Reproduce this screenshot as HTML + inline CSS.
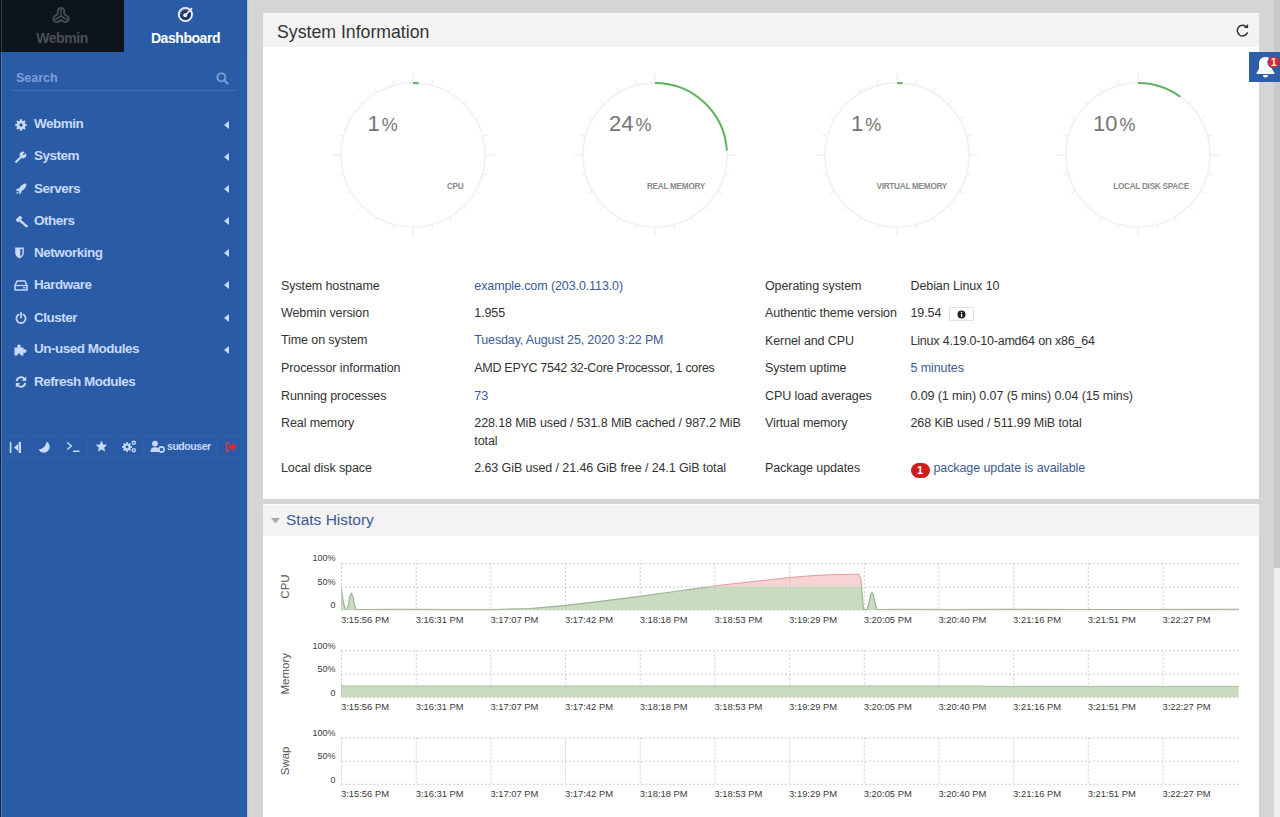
<!DOCTYPE html>
<html><head><meta charset="utf-8">
<style>
*{box-sizing:border-box;margin:0;padding:0}
html,body{width:1280px;height:817px;overflow:hidden}
body{background:#d5d5d5;font-family:"Liberation Sans",sans-serif;position:relative;color:#333}
.abs{position:absolute}
#side{position:absolute;left:0;top:0;width:247px;height:817px;background:#2a5ba6}
#side .edge{position:absolute;left:0;top:0;width:3px;height:817px;background:linear-gradient(90deg,#0b2459 0,#0b2459 1px,#5877ab 1px,#5877ab 2px,#2e5a98 2px)}
#side .edge2{position:absolute;left:0;top:0;width:3px;height:52px;background:linear-gradient(90deg,#05080c 0,#05080c 1px,#3c4148 1px,#3c4148 2px,#0e141c 2px)}
#side .rline{position:absolute;left:246px;top:0;width:1px;height:817px;background:#26508f}
#tabw{position:absolute;left:0;top:0;width:124px;height:52px;background:#0e141c}
.tabt{position:absolute;top:30px;height:16px;line-height:16px;font-size:14px;font-weight:bold;letter-spacing:-0.45px;text-align:center}
#search{position:absolute;left:16px;top:70px;font-size:12.5px;font-weight:bold;color:#7e9fd6;line-height:16px}
#sline{position:absolute;left:11px;top:90px;width:226px;height:1px;background:#3d6cb5}
.mi{position:absolute;left:0;width:247px;height:20px}
.mi .t{position:absolute;left:34px;top:1.7px;font-size:13.5px;font-weight:bold;letter-spacing:-0.5px;color:#c8daf9;line-height:16px;white-space:nowrap}

.mi .car{position:absolute;left:224px;top:6px;width:0;height:0;border-top:4px solid transparent;border-bottom:4px solid transparent;border-right:5px solid #c8daf9}
#tool{position:absolute;left:3px;top:435px;width:244px;height:23px;border-top:1px solid #3161ab;border-bottom:1px solid #3161ab}
.sep{position:absolute;top:437px;width:1px;height:20px;background:#3060aa}
#main{position:absolute;left:263px;top:13px;width:996px;height:486px;background:#fff}
#main .hd{position:absolute;left:0;top:0;width:996px;height:34px;background:#f3f3f3;border-top:1px solid #fbfbfb}
#main .hd .tt{position:absolute;left:14px;top:8px;font-size:17.7px;line-height:20px;color:#333;white-space:nowrap}
#stats{position:absolute;left:263px;top:504px;width:996px;height:320px;background:#fff}
#stats .hd{position:absolute;left:0;top:0;width:996px;height:32px;background:#f3f3f3;border-top:1px solid #fbfbfb}
#stats .hd .tt{position:absolute;left:23px;top:6px;font-size:15.5px;line-height:18px;color:#3b5a96;white-space:nowrap}
.row{position:absolute;font-size:12.5px;line-height:18px;white-space:nowrap;color:#333;letter-spacing:-0.1px}
.lnk{color:#3a5a97}
#scroll{position:absolute;left:1274px;top:0;width:6px;height:817px;background:#efefef}
#thumb{position:absolute;left:1274px;top:0;width:6px;height:568px;background:#c9c9c9}
.gnum{font-size:22px;line-height:26px;color:#757575;white-space:nowrap}
.gnum span{font-size:18px;margin-left:2px}
.glab{width:200px;margin-top:1.5px;text-align:right;font-size:8.2px;font-weight:bold;color:#8a8a8a;line-height:10px;letter-spacing:-0.25px;white-space:nowrap}
.badge{display:inline-block;width:19px;height:15px;border-radius:8px;background:#d11c1c;color:#fff;font-weight:bold;font-size:11px;line-height:15px;text-align:center;margin-right:4px;vertical-align:-2px}
</style></head><body>
<div id="side">
  <div id="tabw"></div>
  <div class="edge"></div><div class="edge2"></div>
  <div class="tabt" style="left:0;width:124px;color:#4b5058">Webmin</div>
  <div class="tabt" style="left:124px;width:123px;color:#fff">Dashboard</div>

  <svg class="abs" style="left:51.5px;top:6.5px" width="18" height="17" viewBox="0 0 18 17">
    <g fill="none" stroke-linecap="round" stroke-linejoin="round">
      <path d="M9 9 L9 4.4 M9 9 L4.6 11.8 M9 9 L13.4 11.8" stroke="#464c54" stroke-width="8.6"/>
      <path d="M9 9 L9 4.4 M9 9 L4.6 11.8 M9 9 L13.4 11.8" stroke="#0e141c" stroke-width="4.6"/>
      <path d="M9 9 L9 1.5 M9 9 L2.6 13 M9 9 L15.4 13" stroke="#464c54" stroke-width="1.5"/>
    </g>
  </svg>
  <svg class="abs" style="left:177px;top:6px" width="17" height="17" viewBox="0 0 17 17">
    <circle cx="8.4" cy="8.5" r="6.6" fill="#1f3566" stroke="#eef4ff" stroke-width="1.9"/>
    <path d="M4 8 A4.5 4.5 0 0 1 11 4.3" fill="none" stroke="#8fa6d0" stroke-width="1.3" stroke-dasharray="1 1"/>
    <line x1="8.2" y1="9.3" x2="14.6" y2="2.6" stroke="#eef4ff" stroke-width="1.6" stroke-linecap="round"/>
    <circle cx="8.2" cy="9.3" r="2" fill="#eef4ff"/>
  </svg>
  <svg class="abs" style="left:216px;top:72px" width="13" height="13" viewBox="0 0 13 13">
    <circle cx="5.3" cy="5.3" r="4" fill="none" stroke="#7e9fd6" stroke-width="1.8"/>
    <line x1="8.3" y1="8.3" x2="11.6" y2="11.6" stroke="#7e9fd6" stroke-width="2" stroke-linecap="round"/>
  </svg>
  <div id="search">Search</div>
  <div id="sline"></div>
<div class="mi" style="top:114.5px"><div class="ic" style="position:absolute;left:14.6px;top:4.0px;line-height:0"><svg width="12" height="12" viewBox="0 0 12 12"><g fill="#c8daf9"><circle cx="6" cy="6" r="4.3"/><g stroke="#c8daf9" stroke-width="2.2"><line x1="6" y1="0.3" x2="6" y2="11.7"/><line x1="0.3" y1="6" x2="11.7" y2="6"/><line x1="2" y1="2" x2="10" y2="10"/><line x1="10" y1="2" x2="2" y2="10"/></g></g><circle cx="6" cy="6" r="1.7" fill="#2a5ba6"/></svg></div><div class="t">Webmin</div><div class="car"></div></div>
<div class="mi" style="top:146.8px"><div class="ic" style="position:absolute;left:15.2px;top:4.0px;line-height:0"><svg width="12" height="12" viewBox="0 0 12 12"><path d="M1.2 10.8 L6.3 5.7" stroke="#c8daf9" stroke-width="2.2" stroke-linecap="round"/><path d="M5 5.5 A3.3 3.3 0 0 1 9.7 1.2 L7.8 3 L8.9 4.1 L10.8 2.3 A3.3 3.3 0 0 1 6.5 7 Z" fill="#c8daf9"/></svg></div><div class="t">System</div><div class="car"></div></div>
<div class="mi" style="top:179.0px"><div class="ic" style="position:absolute;left:15.2px;top:4.0px;line-height:0"><svg width="12" height="12" viewBox="0 0 12 12"><path d="M11.5 0.5 C8 0.5 5.5 2.5 4 5.5 L2 5.8 L0.5 7.8 L3 7.6 L4.4 9 L4.2 11.5 L6.2 10 L6.5 8 C9.5 6.5 11.5 4 11.5 0.5 Z" fill="#c8daf9"/><path d="M2.6 8.2 L0.8 11.2 L3.8 9.4 Z" fill="#c8daf9"/></svg></div><div class="t">Servers</div><div class="car"></div></div>
<div class="mi" style="top:211.2px"><div class="ic" style="position:absolute;left:14.8px;top:3.5px;line-height:0"><svg width="13" height="13" viewBox="0 0 13 13"><path d="M0.5 5 L5 0.5 L7.5 3 L3 7.5 Z" fill="#c8daf9"/><path d="M5.5 6 L11.8 11.3" stroke="#c8daf9" stroke-width="2.3" stroke-linecap="round"/></svg></div><div class="t">Others</div><div class="car"></div></div>
<div class="mi" style="top:243.0px"><div class="ic" style="position:absolute;left:15px;top:4.0px;line-height:0"><svg width="9" height="12" viewBox="0 0 9 12"><path d="M0.2 0.6 L8.8 0.6 L8.8 6 C8.8 8.8 6.5 10.6 4.5 11.6 C2.5 10.6 0.2 8.8 0.2 6 Z" fill="#c8daf9"/><path d="M5.3 2 L7.4 2 L7.4 6 C7.4 7.6 6.5 8.8 5.3 9.6 Z" fill="#2a5ba6"/></svg></div><div class="t">Networking</div><div class="car"></div></div>
<div class="mi" style="top:275.2px"><div class="ic" style="position:absolute;left:13.5px;top:4.5px;line-height:0"><svg width="14" height="11" viewBox="0 0 14 11"><path d="M1 5.5 L3 1 L11 1 L13 5.5 L13 10 L1 10 Z" fill="none" stroke="#c8daf9" stroke-width="1.5" stroke-linejoin="round"/><line x1="1" y1="5.5" x2="13" y2="5.5" stroke="#c8daf9" stroke-width="1.3"/><rect x="9" y="7.2" width="2.5" height="1.2" fill="#c8daf9"/></svg></div><div class="t">Hardware</div><div class="car"></div></div>
<div class="mi" style="top:308.2px"><div class="ic" style="position:absolute;left:14.8px;top:4.0px;line-height:0"><svg width="12" height="12" viewBox="0 0 12 12"><path d="M3.5 2.6 A4.6 4.6 0 1 0 8.5 2.6" fill="none" stroke="#c8daf9" stroke-width="1.8" stroke-linecap="round"/><line x1="6" y1="0.9" x2="6" y2="5.6" stroke="#c8daf9" stroke-width="1.8" stroke-linecap="round"/></svg></div><div class="t">Cluster</div><div class="car"></div></div>
<div class="mi" style="top:339.7px"><div class="ic" style="position:absolute;left:14.2px;top:4.0px;line-height:0"><svg width="13" height="12" viewBox="0 0 13 12"><path d="M0.5 3.5 L3.5 3.5 C3 2.5 3 0.5 5 0.5 C7 0.5 7 2.5 6.5 3.5 L9.5 3.5 L9.5 5.5 C10.5 5 12.5 5 12.5 7 C12.5 9 10.5 9 9.5 8.5 L9.5 11.5 L6.5 11.5 C7 10.5 6.5 9.5 5 9.5 C3.5 9.5 3 10.5 3.5 11.5 L0.5 11.5 Z" fill="#c8daf9"/></svg></div><div class="t">Un-used Modules</div><div class="car"></div></div>
<div class="mi" style="top:372.4px"><div class="ic" style="position:absolute;left:14.9px;top:4.0px;line-height:0"><svg width="12" height="12" viewBox="0 0 12 12"><path d="M1.6 5 A4.5 4.5 0 0 1 9.6 3" fill="none" stroke="#c8daf9" stroke-width="1.9"/><path d="M11.2 0.6 L11.2 5 L6.8 5 Z" fill="#c8daf9"/><path d="M10.4 7 A4.5 4.5 0 0 1 2.4 9" fill="none" stroke="#c8daf9" stroke-width="1.9"/><path d="M0.8 11.4 L0.8 7 L5.2 7 Z" fill="#c8daf9"/></svg></div><div class="t">Refresh Modules</div></div>
  <div id="tool"></div>
  <div class="sep" style="left:29px"></div><div class="sep" style="left:58px"></div><div class="sep" style="left:87px"></div><div class="sep" style="left:114px"></div><div class="sep" style="left:143px"></div><div class="sep" style="left:216px"></div>
  <svg class="abs" style="left:9px;top:441px" width="13" height="13" viewBox="0 0 13 13">
    <rect x="0.8" y="1" width="1.6" height="11" fill="#c8daf9"/><rect x="9.6" y="1" width="2.4" height="11" fill="#c8daf9"/><path d="M9 3 L5 6.5 L9 10 Z" fill="#c8daf9"/>
  </svg>
  <svg class="abs" style="left:38px;top:441px" width="12" height="12" viewBox="0 0 12 12">
    <path d="M8.6 0.6 A5.9 5.9 0 1 1 0.6 8.6 A8.5 8.5 0 0 0 8.6 0.6 Z" fill="#c8daf9"/>
  </svg>
  <svg class="abs" style="left:66px;top:440px" width="15" height="13" viewBox="0 0 15 13">
    <path d="M1.2 2.5 L5.3 6 L1.2 9.5" fill="none" stroke="#c8daf9" stroke-width="1.5" stroke-linejoin="miter"/>
    <rect x="7" y="10.5" width="6.5" height="1.5" fill="#c8daf9"/>
  </svg>
  <svg class="abs" style="left:95px;top:440px" width="13" height="13" viewBox="0 0 13 13">
    <path d="M6.5 0.6 L8.2 4.4 L12.3 4.7 L9.2 7.4 L10.1 11.6 L6.5 9.4 L2.9 11.6 L3.8 7.4 L0.7 4.7 L4.8 4.4 Z" fill="#c8daf9"/>
  </svg>
  <svg class="abs" style="left:122px;top:440px" width="15" height="13" viewBox="0 0 15 13">
    <g fill="#c8daf9">
      <circle cx="5" cy="7" r="3.6"/><g stroke="#c8daf9" stroke-width="1.7"><line x1="5" y1="2" x2="5" y2="12"/><line x1="0" y1="7" x2="10" y2="7"/><line x1="1.5" y1="3.5" x2="8.5" y2="10.5"/><line x1="8.5" y1="3.5" x2="1.5" y2="10.5"/></g>
      <circle cx="11.8" cy="2.8" r="2.2"/><circle cx="11.8" cy="10.2" r="2.2"/>
    </g>
    <circle cx="5" cy="7" r="1.4" fill="#2a5ba6"/><circle cx="11.8" cy="2.8" r="0.9" fill="#2a5ba6"/><circle cx="11.8" cy="10.2" r="0.9" fill="#2a5ba6"/>
  </svg>
  <svg class="abs" style="left:150px;top:440px" width="15" height="13" viewBox="0 0 15 13">
    <circle cx="5" cy="3.6" r="2.9" fill="#c8daf9"/><path d="M0.5 12 C0.5 8.5 2 7.2 5 7.2 C7 7.2 8.2 7.8 8.8 9 L8.8 12 Z" fill="#c8daf9"/>
    <circle cx="11.5" cy="9.5" r="2.6" fill="none" stroke="#c8daf9" stroke-width="1.6"/>
  </svg>
  <div class="abs" style="left:167px;top:439px;font-size:10.5px;font-weight:bold;color:#c8daf9;line-height:14px;letter-spacing:-0.45px">sudouser</div>
  <svg class="abs" style="left:225px;top:442px" width="12" height="10" viewBox="0 0 12 10">
    <path d="M4.5 1 L1.5 1 L1.5 9 L4.5 9" fill="none" stroke="#d9413a" stroke-width="1.4"/>
    <path d="M4 3.2 L7.5 3.2 L7.5 0.8 L11.5 5 L7.5 9.2 L7.5 6.8 L4 6.8 Z" fill="#f0242a"/>
  </svg>

</div>
<div id="main">
  <div class="hd"><div class="tt">System Information</div></div>
</div>
<svg class="abs" style="left:323.0px;top:65.2px" width="180" height="180" viewBox="0 0 180 180"><circle cx="90.0" cy="90.0" r="72" fill="none" stroke="#f3f3f3" stroke-width="2"/><line x1="90.00" y1="17.50" x2="90.00" y2="8.50" stroke="#e9e9e9" stroke-width="1"/><line x1="108.76" y1="19.97" x2="109.93" y2="15.62" stroke="#e9e9e9" stroke-width="1"/><line x1="126.25" y1="27.21" x2="128.50" y2="23.32" stroke="#e9e9e9" stroke-width="1"/><line x1="141.27" y1="38.73" x2="144.45" y2="35.55" stroke="#e9e9e9" stroke-width="1"/><line x1="152.79" y1="53.75" x2="156.68" y2="51.50" stroke="#e9e9e9" stroke-width="1"/><line x1="160.03" y1="71.24" x2="164.38" y2="70.07" stroke="#e9e9e9" stroke-width="1"/><line x1="162.50" y1="90.00" x2="171.50" y2="90.00" stroke="#e9e9e9" stroke-width="1"/><line x1="160.03" y1="108.76" x2="164.38" y2="109.93" stroke="#e9e9e9" stroke-width="1"/><line x1="152.79" y1="126.25" x2="156.68" y2="128.50" stroke="#e9e9e9" stroke-width="1"/><line x1="141.27" y1="141.27" x2="144.45" y2="144.45" stroke="#e9e9e9" stroke-width="1"/><line x1="126.25" y1="152.79" x2="128.50" y2="156.68" stroke="#e9e9e9" stroke-width="1"/><line x1="108.76" y1="160.03" x2="109.93" y2="164.38" stroke="#e9e9e9" stroke-width="1"/><line x1="90.00" y1="162.50" x2="90.00" y2="171.50" stroke="#e9e9e9" stroke-width="1"/><line x1="71.24" y1="160.03" x2="70.07" y2="164.38" stroke="#e9e9e9" stroke-width="1"/><line x1="53.75" y1="152.79" x2="51.50" y2="156.68" stroke="#e9e9e9" stroke-width="1"/><line x1="38.73" y1="141.27" x2="35.55" y2="144.45" stroke="#e9e9e9" stroke-width="1"/><line x1="27.21" y1="126.25" x2="23.32" y2="128.50" stroke="#e9e9e9" stroke-width="1"/><line x1="19.97" y1="108.76" x2="15.62" y2="109.93" stroke="#e9e9e9" stroke-width="1"/><line x1="17.50" y1="90.00" x2="8.50" y2="90.00" stroke="#e9e9e9" stroke-width="1"/><line x1="19.97" y1="71.24" x2="15.62" y2="70.07" stroke="#e9e9e9" stroke-width="1"/><line x1="27.21" y1="53.75" x2="23.32" y2="51.50" stroke="#e9e9e9" stroke-width="1"/><line x1="38.73" y1="38.73" x2="35.55" y2="35.55" stroke="#e9e9e9" stroke-width="1"/><line x1="53.75" y1="27.21" x2="51.50" y2="23.32" stroke="#e9e9e9" stroke-width="1"/><line x1="71.24" y1="19.97" x2="70.07" y2="15.62" stroke="#e9e9e9" stroke-width="1"/><path d="M90.0 18.0 A72 72 0 0 1 95.65 18.22" fill="none" stroke="#5fb25f" stroke-width="2"/></svg>
<div class="abs gnum" style="left:367.5px;top:111.2px">1<span>%</span></div>
<div class="abs glab" style="left:263.5px;top:180.2px">CPU</div>
<svg class="abs" style="left:564.6px;top:65.2px" width="180" height="180" viewBox="0 0 180 180"><circle cx="90.0" cy="90.0" r="72" fill="none" stroke="#f3f3f3" stroke-width="2"/><line x1="90.00" y1="17.50" x2="90.00" y2="8.50" stroke="#e9e9e9" stroke-width="1"/><line x1="108.76" y1="19.97" x2="109.93" y2="15.62" stroke="#e9e9e9" stroke-width="1"/><line x1="126.25" y1="27.21" x2="128.50" y2="23.32" stroke="#e9e9e9" stroke-width="1"/><line x1="141.27" y1="38.73" x2="144.45" y2="35.55" stroke="#e9e9e9" stroke-width="1"/><line x1="152.79" y1="53.75" x2="156.68" y2="51.50" stroke="#e9e9e9" stroke-width="1"/><line x1="160.03" y1="71.24" x2="164.38" y2="70.07" stroke="#e9e9e9" stroke-width="1"/><line x1="162.50" y1="90.00" x2="171.50" y2="90.00" stroke="#e9e9e9" stroke-width="1"/><line x1="160.03" y1="108.76" x2="164.38" y2="109.93" stroke="#e9e9e9" stroke-width="1"/><line x1="152.79" y1="126.25" x2="156.68" y2="128.50" stroke="#e9e9e9" stroke-width="1"/><line x1="141.27" y1="141.27" x2="144.45" y2="144.45" stroke="#e9e9e9" stroke-width="1"/><line x1="126.25" y1="152.79" x2="128.50" y2="156.68" stroke="#e9e9e9" stroke-width="1"/><line x1="108.76" y1="160.03" x2="109.93" y2="164.38" stroke="#e9e9e9" stroke-width="1"/><line x1="90.00" y1="162.50" x2="90.00" y2="171.50" stroke="#e9e9e9" stroke-width="1"/><line x1="71.24" y1="160.03" x2="70.07" y2="164.38" stroke="#e9e9e9" stroke-width="1"/><line x1="53.75" y1="152.79" x2="51.50" y2="156.68" stroke="#e9e9e9" stroke-width="1"/><line x1="38.73" y1="141.27" x2="35.55" y2="144.45" stroke="#e9e9e9" stroke-width="1"/><line x1="27.21" y1="126.25" x2="23.32" y2="128.50" stroke="#e9e9e9" stroke-width="1"/><line x1="19.97" y1="108.76" x2="15.62" y2="109.93" stroke="#e9e9e9" stroke-width="1"/><line x1="17.50" y1="90.00" x2="8.50" y2="90.00" stroke="#e9e9e9" stroke-width="1"/><line x1="19.97" y1="71.24" x2="15.62" y2="70.07" stroke="#e9e9e9" stroke-width="1"/><line x1="27.21" y1="53.75" x2="23.32" y2="51.50" stroke="#e9e9e9" stroke-width="1"/><line x1="38.73" y1="38.73" x2="35.55" y2="35.55" stroke="#e9e9e9" stroke-width="1"/><line x1="53.75" y1="27.21" x2="51.50" y2="23.32" stroke="#e9e9e9" stroke-width="1"/><line x1="71.24" y1="19.97" x2="70.07" y2="15.62" stroke="#e9e9e9" stroke-width="1"/><path d="M90.0 18.0 A72 72 0 0 1 161.86 85.48" fill="none" stroke="#5fb25f" stroke-width="2"/></svg>
<div class="abs gnum" style="left:609.1px;top:111.2px">24<span>%</span></div>
<div class="abs glab" style="left:505.1px;top:180.2px">REAL MEMORY</div>
<svg class="abs" style="left:806.6px;top:65.2px" width="180" height="180" viewBox="0 0 180 180"><circle cx="90.0" cy="90.0" r="72" fill="none" stroke="#f3f3f3" stroke-width="2"/><line x1="90.00" y1="17.50" x2="90.00" y2="8.50" stroke="#e9e9e9" stroke-width="1"/><line x1="108.76" y1="19.97" x2="109.93" y2="15.62" stroke="#e9e9e9" stroke-width="1"/><line x1="126.25" y1="27.21" x2="128.50" y2="23.32" stroke="#e9e9e9" stroke-width="1"/><line x1="141.27" y1="38.73" x2="144.45" y2="35.55" stroke="#e9e9e9" stroke-width="1"/><line x1="152.79" y1="53.75" x2="156.68" y2="51.50" stroke="#e9e9e9" stroke-width="1"/><line x1="160.03" y1="71.24" x2="164.38" y2="70.07" stroke="#e9e9e9" stroke-width="1"/><line x1="162.50" y1="90.00" x2="171.50" y2="90.00" stroke="#e9e9e9" stroke-width="1"/><line x1="160.03" y1="108.76" x2="164.38" y2="109.93" stroke="#e9e9e9" stroke-width="1"/><line x1="152.79" y1="126.25" x2="156.68" y2="128.50" stroke="#e9e9e9" stroke-width="1"/><line x1="141.27" y1="141.27" x2="144.45" y2="144.45" stroke="#e9e9e9" stroke-width="1"/><line x1="126.25" y1="152.79" x2="128.50" y2="156.68" stroke="#e9e9e9" stroke-width="1"/><line x1="108.76" y1="160.03" x2="109.93" y2="164.38" stroke="#e9e9e9" stroke-width="1"/><line x1="90.00" y1="162.50" x2="90.00" y2="171.50" stroke="#e9e9e9" stroke-width="1"/><line x1="71.24" y1="160.03" x2="70.07" y2="164.38" stroke="#e9e9e9" stroke-width="1"/><line x1="53.75" y1="152.79" x2="51.50" y2="156.68" stroke="#e9e9e9" stroke-width="1"/><line x1="38.73" y1="141.27" x2="35.55" y2="144.45" stroke="#e9e9e9" stroke-width="1"/><line x1="27.21" y1="126.25" x2="23.32" y2="128.50" stroke="#e9e9e9" stroke-width="1"/><line x1="19.97" y1="108.76" x2="15.62" y2="109.93" stroke="#e9e9e9" stroke-width="1"/><line x1="17.50" y1="90.00" x2="8.50" y2="90.00" stroke="#e9e9e9" stroke-width="1"/><line x1="19.97" y1="71.24" x2="15.62" y2="70.07" stroke="#e9e9e9" stroke-width="1"/><line x1="27.21" y1="53.75" x2="23.32" y2="51.50" stroke="#e9e9e9" stroke-width="1"/><line x1="38.73" y1="38.73" x2="35.55" y2="35.55" stroke="#e9e9e9" stroke-width="1"/><line x1="53.75" y1="27.21" x2="51.50" y2="23.32" stroke="#e9e9e9" stroke-width="1"/><line x1="71.24" y1="19.97" x2="70.07" y2="15.62" stroke="#e9e9e9" stroke-width="1"/><path d="M90.0 18.0 A72 72 0 0 1 95.65 18.22" fill="none" stroke="#5fb25f" stroke-width="2"/></svg>
<div class="abs gnum" style="left:851.1px;top:111.2px">1<span>%</span></div>
<div class="abs glab" style="left:747.1px;top:180.2px">VIRTUAL MEMORY</div>
<svg class="abs" style="left:1048.4px;top:65.2px" width="180" height="180" viewBox="0 0 180 180"><circle cx="90.0" cy="90.0" r="72" fill="none" stroke="#f3f3f3" stroke-width="2"/><line x1="90.00" y1="17.50" x2="90.00" y2="8.50" stroke="#e9e9e9" stroke-width="1"/><line x1="108.76" y1="19.97" x2="109.93" y2="15.62" stroke="#e9e9e9" stroke-width="1"/><line x1="126.25" y1="27.21" x2="128.50" y2="23.32" stroke="#e9e9e9" stroke-width="1"/><line x1="141.27" y1="38.73" x2="144.45" y2="35.55" stroke="#e9e9e9" stroke-width="1"/><line x1="152.79" y1="53.75" x2="156.68" y2="51.50" stroke="#e9e9e9" stroke-width="1"/><line x1="160.03" y1="71.24" x2="164.38" y2="70.07" stroke="#e9e9e9" stroke-width="1"/><line x1="162.50" y1="90.00" x2="171.50" y2="90.00" stroke="#e9e9e9" stroke-width="1"/><line x1="160.03" y1="108.76" x2="164.38" y2="109.93" stroke="#e9e9e9" stroke-width="1"/><line x1="152.79" y1="126.25" x2="156.68" y2="128.50" stroke="#e9e9e9" stroke-width="1"/><line x1="141.27" y1="141.27" x2="144.45" y2="144.45" stroke="#e9e9e9" stroke-width="1"/><line x1="126.25" y1="152.79" x2="128.50" y2="156.68" stroke="#e9e9e9" stroke-width="1"/><line x1="108.76" y1="160.03" x2="109.93" y2="164.38" stroke="#e9e9e9" stroke-width="1"/><line x1="90.00" y1="162.50" x2="90.00" y2="171.50" stroke="#e9e9e9" stroke-width="1"/><line x1="71.24" y1="160.03" x2="70.07" y2="164.38" stroke="#e9e9e9" stroke-width="1"/><line x1="53.75" y1="152.79" x2="51.50" y2="156.68" stroke="#e9e9e9" stroke-width="1"/><line x1="38.73" y1="141.27" x2="35.55" y2="144.45" stroke="#e9e9e9" stroke-width="1"/><line x1="27.21" y1="126.25" x2="23.32" y2="128.50" stroke="#e9e9e9" stroke-width="1"/><line x1="19.97" y1="108.76" x2="15.62" y2="109.93" stroke="#e9e9e9" stroke-width="1"/><line x1="17.50" y1="90.00" x2="8.50" y2="90.00" stroke="#e9e9e9" stroke-width="1"/><line x1="19.97" y1="71.24" x2="15.62" y2="70.07" stroke="#e9e9e9" stroke-width="1"/><line x1="27.21" y1="53.75" x2="23.32" y2="51.50" stroke="#e9e9e9" stroke-width="1"/><line x1="38.73" y1="38.73" x2="35.55" y2="35.55" stroke="#e9e9e9" stroke-width="1"/><line x1="53.75" y1="27.21" x2="51.50" y2="23.32" stroke="#e9e9e9" stroke-width="1"/><line x1="71.24" y1="19.97" x2="70.07" y2="15.62" stroke="#e9e9e9" stroke-width="1"/><path d="M90.0 18.0 A72 72 0 0 1 132.32 31.75" fill="none" stroke="#5fb25f" stroke-width="2"/></svg>
<div class="abs gnum" style="left:1092.9px;top:111.2px">10<span>%</span></div>
<div class="abs glab" style="left:988.9px;top:180.2px">LOCAL DISK SPACE</div>
<div class="row" style="left:281px;top:276.75px">System hostname</div><div class="row" style="left:474.3px;top:276.75px;"><span class="lnk">example.com (203.0.113.0)</span></div>
<div class="row" style="left:281px;top:304.05px">Webmin version</div><div class="row" style="left:474.3px;top:304.05px;">1.955</div>
<div class="row" style="left:281px;top:331.45px">Time on system</div><div class="row" style="left:474.3px;top:331.45px;letter-spacing:-0.15px"><span class="lnk">Tuesday, August 25, 2020 3:22 PM</span></div>
<div class="row" style="left:281px;top:358.75px">Processor information</div><div class="row" style="left:474.3px;top:358.75px;letter-spacing:-0.3px">AMD EPYC 7542 32-Core Processor, 1 cores</div>
<div class="row" style="left:281px;top:386.55px">Running processes</div><div class="row" style="left:474.3px;top:386.55px;"><span class="lnk">73</span></div>
<div class="row" style="left:281px;top:413.55px">Real memory</div><div class="row" style="left:474.3px;top:413.55px;">228.18 MiB used / 531.8 MiB cached / 987.2 MiB<br>total</div>
<div class="row" style="left:281px;top:459.15px">Local disk space</div><div class="row" style="left:474.3px;top:459.15px;letter-spacing:-0.1px">2.63 GiB used / 21.46 GiB free / 24.1 GiB total</div>
<div class="row" style="left:765px;top:277.15px">Operating system</div><div class="row" style="left:910.5px;top:277.15px;">Debian Linux 10</div>
<div class="row" style="left:765px;top:304.25px">Authentic theme version</div><div class="row" style="left:910.5px;top:304.25px;">19.54</div>
<div class="row" style="left:765px;top:331.75px">Kernel and CPU</div><div class="row" style="left:910.5px;top:331.75px;letter-spacing:-0.2px">Linux 4.19.0-10-amd64 on x86_64</div>
<div class="row" style="left:765px;top:358.85px">System uptime</div><div class="row" style="left:910.5px;top:358.85px;"><span class="lnk">5 minutes</span></div>
<div class="row" style="left:765px;top:386.75px">CPU load averages</div><div class="row" style="left:910.5px;top:386.75px;letter-spacing:-0.1px">0.09 (1 min) 0.07 (5 mins) 0.04 (15 mins)</div>
<div class="row" style="left:765px;top:413.75px">Virtual memory</div><div class="row" style="left:910.5px;top:413.75px;">268 KiB used / 511.99 MiB total</div>
<div class="row" style="left:765px;top:459.25px">Package updates</div><div class="row" style="left:910.5px;top:459.25px;"><span class="badge">1</span><span class="lnk">package update is available</span></div>
<div class="abs" style="left:948.5px;top:307px;width:25px;height:13.5px;border:1px solid #e3e3e3;background:#fff"></div>
<svg class="abs" style="left:957px;top:309.5px" width="9" height="9" viewBox="0 0 9 9"><circle cx="4.5" cy="4.5" r="4" fill="#222"/><rect x="3.9" y="3.8" width="1.3" height="3.2" fill="#fff"/><circle cx="4.55" cy="2.5" r="0.75" fill="#fff"/></svg>
<svg class="abs" style="left:1235px;top:23px" width="15" height="15" viewBox="0 0 15 15"><path d="M11.6 4.2 A5.3 5.3 0 1 0 12.6 9.3" fill="none" stroke="#333" stroke-width="1.5"/><path d="M8.9 4.9 L13.2 5.1 L13.0 0.9 Z" fill="#333"/></svg>
<div id="stats">
  <div class="hd"><svg class="abs" style="left:8px;top:12.5px" width="9" height="6" viewBox="0 0 9 6"><path d="M0 0 L9 0 L4.5 5.5 Z" fill="#a9a9a9"/></svg><div class="tt">Stats History</div></div>
</div>
<svg class="abs" style="left:0;top:0" width="1280" height="817" viewBox="0 0 1280 817">
<defs><clipPath id="cg"><rect x="341" y="586.5" width="900" height="24"/></clipPath><clipPath id="cr"><rect x="341" y="550" width="900" height="36.5"/></clipPath></defs>
<path d="M341 589 L342 593 L343.5 603 L345.5 609.5 L347 609.6 L348.5 604 L350 596 L351.5 593.5 L353 597 L354.5 605 L356 609.5 L400 609.3 L450 609.6 L495 609.6 L530 608.5 L564 605.6 L600 601.3 L640 596.3 L675 591.5 L705 587.3 L720 585.2 L760 580.8 L789 577.6 L810 575.8 L833 574.6 L859 574.3 L861 580 L863.5 609.5 L867 609.5 L869 603 L870.5 595 L872 592.5 L873.5 595 L875 603 L877 609.5 L900 609.3 L950 609.6 L1000 609.4 L1100 609.5 L1238.7 609.4 L1238.7 610.0 L341 610.0 Z" fill="#f7d3d3" clip-path="url(#cr)"/>
<path d="M341 589 L342 593 L343.5 603 L345.5 609.5 L347 609.6 L348.5 604 L350 596 L351.5 593.5 L353 597 L354.5 605 L356 609.5 L400 609.3 L450 609.6 L495 609.6 L530 608.5 L564 605.6 L600 601.3 L640 596.3 L675 591.5 L705 587.3 L720 585.2 L760 580.8 L789 577.6 L810 575.8 L833 574.6 L859 574.3 L861 580 L863.5 609.5 L867 609.5 L869 603 L870.5 595 L872 592.5 L873.5 595 L875 603 L877 609.5 L900 609.3 L950 609.6 L1000 609.4 L1100 609.5 L1238.7 609.4" fill="none" stroke="#e59a9a" stroke-width="1" clip-path="url(#cr)"/>
<path d="M341 589 L342 593 L343.5 603 L345.5 609.5 L347 609.6 L348.5 604 L350 596 L351.5 593.5 L353 597 L354.5 605 L356 609.5 L400 609.3 L450 609.6 L495 609.6 L530 608.5 L564 605.6 L600 601.3 L640 596.3 L675 591.5 L705 587.3 L720 585.2 L760 580.8 L789 577.6 L810 575.8 L833 574.6 L859 574.3 L861 580 L863.5 609.5 L867 609.5 L869 603 L870.5 595 L872 592.5 L873.5 595 L875 603 L877 609.5 L900 609.3 L950 609.6 L1000 609.4 L1100 609.5 L1238.7 609.4 L1238.7 610.0 L341 610.0 Z" fill="#c9dcc0" clip-path="url(#cg)"/>
<path d="M341 589 L342 593 L343.5 603 L345.5 609.5 L347 609.6 L348.5 604 L350 596 L351.5 593.5 L353 597 L354.5 605 L356 609.5 L400 609.3 L450 609.6 L495 609.6 L530 608.5 L564 605.6 L600 601.3 L640 596.3 L675 591.5 L705 587.3 L720 585.2 L760 580.8 L789 577.6 L810 575.8 L833 574.6 L859 574.3 L861 580 L863.5 609.5 L867 609.5 L869 603 L870.5 595 L872 592.5 L873.5 595 L875 603 L877 609.5 L900 609.3 L950 609.6 L1000 609.4 L1100 609.5 L1238.7 609.4" fill="none" stroke="#9db394" stroke-width="1.2" clip-path="url(#cg)"/>
<path d="M341 684.5 L343 686 L983 686 L984 686.4 L1238.7 686.4 L1238.7 697.2 L341 697.2 Z" fill="#c9dcc0"/>
<path d="M341 684.5 L343 686 L983 686 L984 686.4 L1238.7 686.4" fill="none" stroke="#a3c09a" stroke-width="1"/>

<g font-family="Liberation Sans" font-size="9" fill="#3a3a3a">
<g stroke="#c8c8c8" stroke-width="1" stroke-dasharray="2 2" fill="none" opacity="0.9">
<line x1="341.0" y1="563.5" x2="1238.7" y2="563.5"/><line x1="341.0" y1="587.0" x2="1238.7" y2="587.0"/><line x1="341.0" y1="610.0" x2="1238.7" y2="610.0"/>
<line x1="341.5" y1="563.0" x2="341.5" y2="610.0"/>
<line x1="416.2" y1="563.0" x2="416.2" y2="610.0"/>
<line x1="490.9" y1="563.0" x2="490.9" y2="610.0"/>
<line x1="565.5" y1="563.0" x2="565.5" y2="610.0"/>
<line x1="640.2" y1="563.0" x2="640.2" y2="610.0"/>
<line x1="714.9" y1="563.0" x2="714.9" y2="610.0"/>
<line x1="789.6" y1="563.0" x2="789.6" y2="610.0"/>
<line x1="864.3" y1="563.0" x2="864.3" y2="610.0"/>
<line x1="938.9" y1="563.0" x2="938.9" y2="610.0"/>
<line x1="1013.6" y1="563.0" x2="1013.6" y2="610.0"/>
<line x1="1088.3" y1="563.0" x2="1088.3" y2="610.0"/>
<line x1="1163.0" y1="563.0" x2="1163.0" y2="610.0"/>
</g>
<text x="335.5" y="561.4" text-anchor="end">100%</text>
<text x="335.5" y="584.9" text-anchor="end">50%</text>
<text x="335.5" y="608.4" text-anchor="end">0</text>
<text x="341.0" y="622.6" font-size="9.4">3:15:56 PM</text>
<text x="415.7" y="622.6" font-size="9.4">3:16:31 PM</text>
<text x="490.4" y="622.6" font-size="9.4">3:17:07 PM</text>
<text x="565.0" y="622.6" font-size="9.4">3:17:42 PM</text>
<text x="639.7" y="622.6" font-size="9.4">3:18:18 PM</text>
<text x="714.4" y="622.6" font-size="9.4">3:18:53 PM</text>
<text x="789.1" y="622.6" font-size="9.4">3:19:29 PM</text>
<text x="863.8" y="622.6" font-size="9.4">3:20:05 PM</text>
<text x="938.4" y="622.6" font-size="9.4">3:20:40 PM</text>
<text x="1013.1" y="622.6" font-size="9.4">3:21:16 PM</text>
<text x="1087.8" y="622.6" font-size="9.4">3:21:51 PM</text>
<text x="1162.5" y="622.6" font-size="9.4">3:22:27 PM</text>
<text x="0" y="0" font-size="11.5" fill="#555" text-anchor="middle" transform="translate(289.2 586.5) rotate(-90)">CPU</text>
<g stroke="#c8c8c8" stroke-width="1" stroke-dasharray="2 2" fill="none" opacity="0.9">
<line x1="341.0" y1="650.8" x2="1238.7" y2="650.8"/><line x1="341.0" y1="674.1" x2="1238.7" y2="674.1"/><line x1="341.0" y1="697.2" x2="1238.7" y2="697.2"/>
<line x1="341.5" y1="650.3" x2="341.5" y2="697.2"/>
<line x1="416.2" y1="650.3" x2="416.2" y2="697.2"/>
<line x1="490.9" y1="650.3" x2="490.9" y2="697.2"/>
<line x1="565.5" y1="650.3" x2="565.5" y2="697.2"/>
<line x1="640.2" y1="650.3" x2="640.2" y2="697.2"/>
<line x1="714.9" y1="650.3" x2="714.9" y2="697.2"/>
<line x1="789.6" y1="650.3" x2="789.6" y2="697.2"/>
<line x1="864.3" y1="650.3" x2="864.3" y2="697.2"/>
<line x1="938.9" y1="650.3" x2="938.9" y2="697.2"/>
<line x1="1013.6" y1="650.3" x2="1013.6" y2="697.2"/>
<line x1="1088.3" y1="650.3" x2="1088.3" y2="697.2"/>
<line x1="1163.0" y1="650.3" x2="1163.0" y2="697.2"/>
</g>
<text x="335.5" y="648.7" text-anchor="end">100%</text>
<text x="335.5" y="672.0" text-anchor="end">50%</text>
<text x="335.5" y="695.6" text-anchor="end">0</text>
<text x="341.0" y="709.8" font-size="9.4">3:15:56 PM</text>
<text x="415.7" y="709.8" font-size="9.4">3:16:31 PM</text>
<text x="490.4" y="709.8" font-size="9.4">3:17:07 PM</text>
<text x="565.0" y="709.8" font-size="9.4">3:17:42 PM</text>
<text x="639.7" y="709.8" font-size="9.4">3:18:18 PM</text>
<text x="714.4" y="709.8" font-size="9.4">3:18:53 PM</text>
<text x="789.1" y="709.8" font-size="9.4">3:19:29 PM</text>
<text x="863.8" y="709.8" font-size="9.4">3:20:05 PM</text>
<text x="938.4" y="709.8" font-size="9.4">3:20:40 PM</text>
<text x="1013.1" y="709.8" font-size="9.4">3:21:16 PM</text>
<text x="1087.8" y="709.8" font-size="9.4">3:21:51 PM</text>
<text x="1162.5" y="709.8" font-size="9.4">3:22:27 PM</text>
<text x="0" y="0" font-size="11.5" fill="#555" text-anchor="middle" transform="translate(289.2 673.8) rotate(-90)">Memory</text>
<g stroke="#c8c8c8" stroke-width="1" stroke-dasharray="2 2" fill="none" opacity="0.9">
<line x1="341.0" y1="738.0" x2="1238.7" y2="738.0"/><line x1="341.0" y1="761.2" x2="1238.7" y2="761.2"/><line x1="341.0" y1="784.3" x2="1238.7" y2="784.3"/>
<line x1="341.5" y1="737.5" x2="341.5" y2="784.3"/>
<line x1="416.2" y1="737.5" x2="416.2" y2="784.3"/>
<line x1="490.9" y1="737.5" x2="490.9" y2="784.3"/>
<line x1="565.5" y1="737.5" x2="565.5" y2="784.3"/>
<line x1="640.2" y1="737.5" x2="640.2" y2="784.3"/>
<line x1="714.9" y1="737.5" x2="714.9" y2="784.3"/>
<line x1="789.6" y1="737.5" x2="789.6" y2="784.3"/>
<line x1="864.3" y1="737.5" x2="864.3" y2="784.3"/>
<line x1="938.9" y1="737.5" x2="938.9" y2="784.3"/>
<line x1="1013.6" y1="737.5" x2="1013.6" y2="784.3"/>
<line x1="1088.3" y1="737.5" x2="1088.3" y2="784.3"/>
<line x1="1163.0" y1="737.5" x2="1163.0" y2="784.3"/>
</g>
<text x="335.5" y="735.9" text-anchor="end">100%</text>
<text x="335.5" y="759.1" text-anchor="end">50%</text>
<text x="335.5" y="782.7" text-anchor="end">0</text>
<text x="341.0" y="796.9" font-size="9.4">3:15:56 PM</text>
<text x="415.7" y="796.9" font-size="9.4">3:16:31 PM</text>
<text x="490.4" y="796.9" font-size="9.4">3:17:07 PM</text>
<text x="565.0" y="796.9" font-size="9.4">3:17:42 PM</text>
<text x="639.7" y="796.9" font-size="9.4">3:18:18 PM</text>
<text x="714.4" y="796.9" font-size="9.4">3:18:53 PM</text>
<text x="789.1" y="796.9" font-size="9.4">3:19:29 PM</text>
<text x="863.8" y="796.9" font-size="9.4">3:20:05 PM</text>
<text x="938.4" y="796.9" font-size="9.4">3:20:40 PM</text>
<text x="1013.1" y="796.9" font-size="9.4">3:21:16 PM</text>
<text x="1087.8" y="796.9" font-size="9.4">3:21:51 PM</text>
<text x="1162.5" y="796.9" font-size="9.4">3:22:27 PM</text>
<text x="0" y="0" font-size="11.5" fill="#555" text-anchor="middle" transform="translate(289.2 760.9) rotate(-90)">Swap</text>
</g>
</svg>
<div class="abs" style="left:246px;top:0;width:9px;height:817px;background:linear-gradient(90deg,#2b5590 0,#2b5590 1px,#b2c9e3 1px,#b2c9e3 2px,#cad3dc 2px,#cad3dc 3px,#d8d7d0 3px,#d8d7d0 5px,#d6d5dc 5px,#d6d5dc 8px,#d5d5d5 8px)"></div>
<div class="abs" style="left:241px;top:52px;width:2px;height:765px;background:#2260aa"></div>
<div id="scroll"></div><div id="thumb"></div>
<div class="abs" style="left:1249px;top:52px;width:31px;height:30px;background:#2f5ea9"></div>
<svg class="abs" style="left:1249px;top:52px" width="31" height="30" viewBox="0 0 31 30">
<path d="M16.5 5 C12.2 5 10 8.2 10 12 L10 17 L7.6 20.8 C7.3 21.3 7.6 22 8.2 22 L24.8 22 C25.4 22 25.7 21.3 25.4 20.8 L23 17 L23 12 C23 8.2 20.8 5 16.5 5 Z" fill="#fff"/>
<path d="M14 23 A2.5 2.5 0 0 0 19 23 Z" fill="#fff"/>
<circle cx="24.8" cy="10.2" r="6" fill="#e22626" stroke="#2f5ea9" stroke-width="0.8"/>
<text x="24.9" y="13.8" font-family="Liberation Sans" font-size="10" font-weight="bold" fill="#fff" text-anchor="middle">1</text>
</svg>
</body></html>
